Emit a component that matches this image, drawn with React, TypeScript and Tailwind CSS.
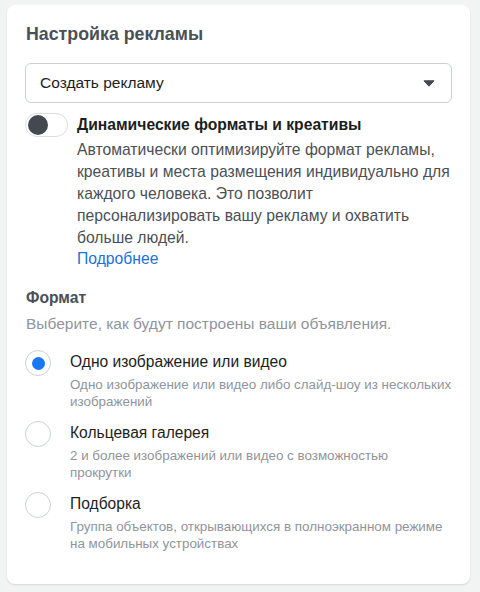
import { useState } from "react";

const formats = [
  {
    id: "single",
    title: "Одно изображение или видео",
    desc: "Одно изображение или видео либо слайд-шоу из нескольких изображений",
  },
  {
    id: "carousel",
    title: "Кольцевая галерея",
    desc: "2 и более изображений или видео с возможностью прокрутки",
  },
  {
    id: "collection",
    title: "Подборка",
    desc: "Группа объектов, открывающихся в полноэкранном режиме на мобильных устройствах",
  },
];

export default function App() {
  const [selected, setSelected] = useState("single");
  const [dynamic, setDynamic] = useState(false);

  return (
    <div className="min-h-[592px] bg-[#f2f3f3] pl-[7px] pr-[10px] pt-[5px] pb-[10px] font-['Liberation_Sans',Arial,sans-serif]">
      <div className="rounded-[8px] bg-white px-[18px] pt-[18px] pb-[32px] shadow-[0_1px_2px_rgba(0,0,0,0.12)]">
        <h2 className="text-[17.8px] leading-[22px] font-bold text-[#4b4f56] pl-px">Настройка рекламы</h2>

        <button className="mt-[18px] flex h-[40px] w-full items-center justify-between rounded-[6px] border border-[#ccd0d5] pl-[14px] pr-[16px] text-left">
          <span className="text-[15.5px] text-[#1c1e21]">Создать рекламу</span>
          <svg width="12" height="7" viewBox="0 0 12 7">
            <path d="M1 0.8h10L6 6.2z" fill="#444950" stroke="#444950" strokeWidth="1" strokeLinejoin="round" />
          </svg>
        </button>

        <div className="mt-[10px] flex">
          <button
            onClick={() => setDynamic((v) => !v)}
            className="flex h-[24px] w-[43px] shrink-0 items-center rounded-full border border-[#dadde1] bg-white px-[2px]"
          >
            <span className="h-[20px] w-[20px] rounded-full bg-[#444950]" />
          </button>
          <div className="ml-[9px] pt-[1px]">
            <p className="text-[15.7px] leading-[22px] font-bold text-[#1c1e21]">Динамические форматы и креативы</p>
            <p className="mt-[3px] text-[15.7px] leading-[22px] text-[#4b4f56]">
              Автоматически оптимизируйте формат рекламы, креативы и места размещения индивидуально для каждого человека. Это позволит персонализировать вашу рекламу и охватить больше людей.
            </p>
            <a className="block text-[15.7px] leading-[20px] text-[#216fdb]">Подробнее</a>
          </div>
        </div>

        <p className="mt-[19px] text-[15.7px] leading-[20px] font-bold text-[#4b4f56] pl-px">Формат</p>
        <p className="mt-[6px] text-[15.5px] leading-[20px] text-[#90949c] pl-px">Выберите, как будут построены ваши объявления.</p>

        <div className="mt-[8px] flex flex-col gap-[3px]">
          {formats.map((f) => (
            <label key={f.id} className="flex cursor-pointer" onClick={() => setSelected(f.id)}>
              <span className="mt-[8px] flex h-[26px] w-[26px] shrink-0 items-center justify-center rounded-full border border-[#ccd0d5] bg-white">
                {selected === f.id && <span className="h-[13px] w-[13px] rounded-full bg-[#1877f2]" />}
              </span>
              <div className="ml-[19px] pt-[10px]">
                <p className="text-[15.6px] leading-[20px] text-[#1c1e21]">{f.title}</p>
                <p className="mt-[4px] text-[13.4px] leading-[17px] text-[#90949c]">{f.desc}</p>
              </div>
            </label>
          ))}
        </div>
      </div>
    </div>
  );
}
